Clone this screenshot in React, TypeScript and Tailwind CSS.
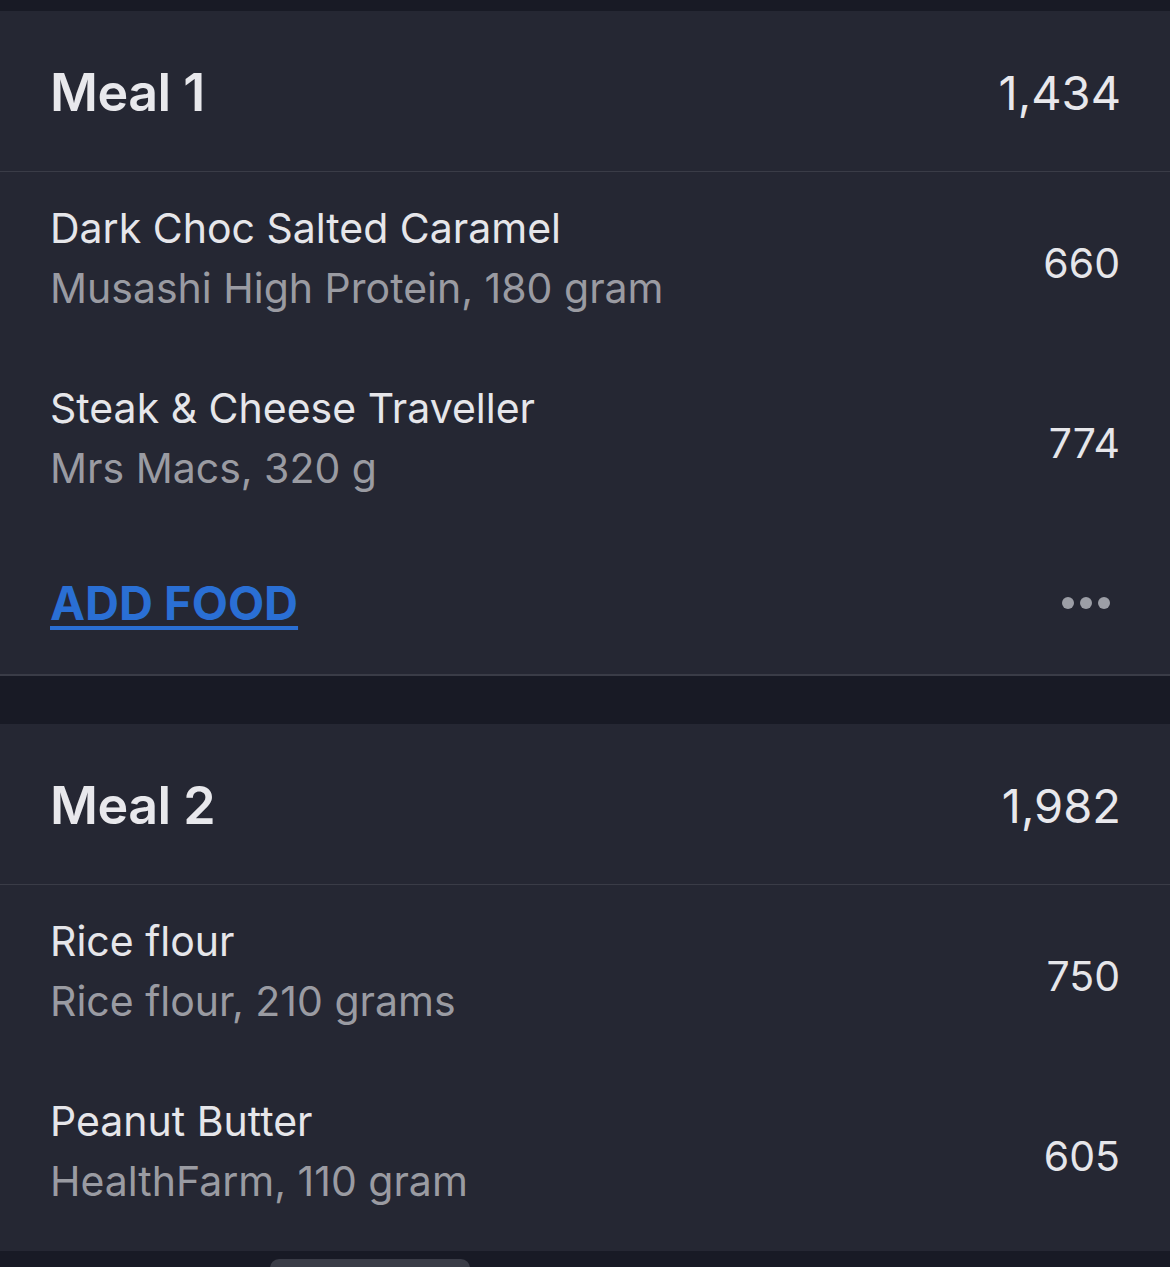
import React from "react";

const font = { fontFamily: "Inter, 'Noto Sans', sans-serif" };

type Item = { name: string; sub: string; cal: string };

function FoodRow({ item }: { item: Item }) {
  return (
    <div className="flex h-[180px] items-center justify-between pl-[50px] pr-[50px]">
      <div className="flex flex-col pb-[8px]">
        <div className="text-[41px] leading-[60px] text-[#e6e6ea]">{item.name}</div>
        <div className="text-[41px] leading-[60px] text-[#9a9ba2]">{item.sub}</div>
      </div>
      <div className="pt-[4px] text-[41px] text-[#e6e6ea]">{item.cal}</div>
    </div>
  );
}

function MealCard({ title, total, items, footer }: { title: string; total: string; items: Item[]; footer: boolean }) {
  return (
    <div className={footer ? "bg-[#252733]" : "bg-[#252733] pb-[6px]"}>
      <div className="flex h-[161px] items-center justify-between border-b border-[#3a3c47] pl-[50px] pr-[49px] pt-[4px]">
        <div className="text-[52px] font-semibold tracking-[-0.5px] text-[#e8e8ec]">{title}</div>
        <div className="text-[47px] text-[#e8e8ec]">{total}</div>
      </div>
      <div>
        {items.map((it) => (
          <FoodRow key={it.name} item={it} />
        ))}
      </div>
      {footer && (
        <div className="flex h-[144px] items-center justify-between border-b-2 border-[#3a3c47] pl-[50px] pr-[60px]">
          <span className="text-[47px] font-bold text-[#2a6fd4] underline decoration-[4px] underline-offset-[6px]">ADD FOOD</span>
          <div className="flex gap-[6px]">
            <span className="h-[12px] w-[12px] rounded-full bg-[#9c9ea6]" />
            <span className="h-[12px] w-[12px] rounded-full bg-[#9c9ea6]" />
            <span className="h-[12px] w-[12px] rounded-full bg-[#9c9ea6]" />
          </div>
        </div>
      )}
    </div>
  );
}

export default function App() {
  return (
    <div style={font} className="relative h-[1267px] w-[1170px] overflow-hidden bg-[#181a25]">
      <div className="h-[11px]" />
      <MealCard
        title="Meal 1"
        total="1,434"
        footer
        items={[
          { name: "Dark Choc Salted Caramel", sub: "Musashi High Protein, 180 gram", cal: "660" },
          { name: "Steak & Cheese Traveller", sub: "Mrs Macs, 320 g", cal: "774" },
        ]}
      />
      <div className="h-[48px]" />
      <MealCard
        title="Meal 2"
        total="1,982"
        footer={false}
        items={[
          { name: "Rice flour", sub: "Rice flour, 210 grams", cal: "750" },
          { name: "Peanut Butter", sub: "HealthFarm, 110 gram", cal: "605" },
        ]}
      />
      <div className="absolute bottom-[-10px] left-[270px] h-[18px] w-[200px] rounded-[10px] bg-[#3a3c47]" />
    </div>
  );
}
